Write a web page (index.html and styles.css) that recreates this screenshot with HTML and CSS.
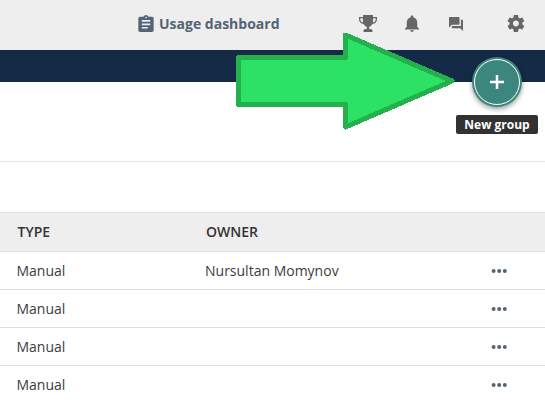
FILE: index.html
```html
<!DOCTYPE html>
<html lang="en">
<head>
<meta charset="utf-8">
<title>Groups</title>
<link rel="stylesheet" href="styles.css">
</head>
<body>
<header class="topbar">
  <a class="usage">
    <svg class="usage-icon" viewBox="3 1 18 20"><path d="M19 3h-4.180C14.400 1.840 13.300 1 12 1s-2.400.84-2.820 2H5c-1.100 0-2 .9-2 2v14c0 1.100.9 2 2 2h14c1.100 0 2-.9 2-2V5c0-1.100-.9-2-2-2zm-7 0c.55 0 1 .45 1 1s-.45 1-1 1-1-.45-1-1 .45-1 1-1zm2 14H7v-2h7v2zm3-4H7v-2h10v2zm0-4H7V7h10v2z"/></svg>
    <span>Usage dashboard</span>
  </a>
  <nav class="actions">
    <svg class="trophy" viewBox="0 0 18 17"><path fill-rule="evenodd" d="M4 0h10v2h4v2.200c0 2.500-1.800 4.500-4.600 4.800-.8 1.500-1.900 2.400-3.200 2.800V14h1.300c1.200 0 2 .8 2 2v1h-9v-1c0-1.200.8-2 2-2h1.300v-2.200C6.500 11.400 5.400 10.500 4.600 9 1.800 8.700 0 6.700 0 4.200V2h4zM1.300 3.300v.9c0 1.600 1 2.900 2.800 3.400C3.900 6.300 3.900 4.800 3.900 3.300zM14.100 3.300c0 1.500 0 3-.2 4.300 1.800-.5 2.800-1.800 2.800-3.400v-.9z"/></svg>
    <svg class="bell" viewBox="4 2 16 20" preserveAspectRatio="none"><path d="M12 22c1.100 0 2-.9 2-2h-4c0 1.100.89 2 2 2zm6-6v-5c0-3.070-1.640-5.640-4.500-6.320V4c0-.83-.67-1.500-1.500-1.500s-1.500.67-1.500 1.500v.68C7.630 5.360 6 7.920 6 11v5l-2 2v1h16v-1l-2-2z"/></svg>
    <svg class="forum" viewBox="2 2 20 20"><path d="M21 6h-2v9H6v2c0 .55.45 1 1 1h11l4 4V7c0-.55-.45-1-1-1zm-4 6V3c0-.55-.45-1-1-1H3c-.55 0-1 .45-1 1v14l4-4h10c.55 0 1-.45 1-1z"/></svg>
    <svg class="gear" viewBox="1.500 2 20 20"><path d="M19.430 12.980c.04-.32.07-.64.07-.98s-.03-.66-.07-.98l2.110-1.650c.19-.15.24-.42.12-.64l-2-3.460c-.12-.22-.39-.3-.61-.22l-2.490 1c-.52-.4-1.080-.73-1.690-.98l-.38-2.650C14.460 2.180 14.250 2 14 2h-4c-.25 0-.46.18-.49.42l-.38 2.650c-.61.25-1.170.59-1.690.98l-2.490-1c-.23-.09-.49 0-.61.22l-2 3.460c-.13.22-.07.49.12.64l2.110 1.650c-.04.32-.07.65-.07.98s.03.66.07.98l-2.110 1.650c-.19.15-.24.42-.12.64l2 3.460c.12.22.39.3.61.22l2.490-1c.52.4 1.080.73 1.690.98l.38 2.650c.03.24.24.42.49.42h4c.25 0 .46-.18.49-.42l.38-2.650c.61-.25 1.170-.59 1.690-.98l2.490 1c.23.09.49 0 .61-.22l2-3.460c.12-.22.07-.49-.12-.64l-2.110-1.650zM12 15.500c-1.930 0-3.500-1.570-3.500-3.500s1.570-3.500 3.500-3.500 3.500 1.570 3.500 3.500-1.570 3.500-3.500 3.500z"/></svg>
  </nav>
</header>
<div class="banner">
  <svg class="arrow" viewBox="0 0 220 100" shape-rendering="crispEdges"><path d="M3.500 26.500H110.500V4L217 50 110.500 96V73.500H3.500Z"/></svg>
  <button class="add" aria-label="New group"><svg viewBox="0 0 14 14"><path d="M7 0v14M0 7h14"/></svg></button>
  <div class="tooltip">New group</div>
</div>
<div class="spacer"></div>
<div class="filters"></div>
<main class="table">
  <div class="row head"><span>TYPE</span><span>OWNER</span><span></span></div>
  <div class="row"><span>Manual</span><span>Nursultan Momynov</span><svg class="more" viewBox="0 0 16 4"><circle cx="2.600" cy="2" r="2"/><circle cx="8.200" cy="2" r="2"/><circle cx="13.800" cy="2" r="2"/></svg></div>
  <div class="row"><span>Manual</span><span></span><svg class="more" viewBox="0 0 16 4"><circle cx="2.600" cy="2" r="2"/><circle cx="8.200" cy="2" r="2"/><circle cx="13.800" cy="2" r="2"/></svg></div>
  <div class="row"><span>Manual</span><span></span><svg class="more" viewBox="0 0 16 4"><circle cx="2.600" cy="2" r="2"/><circle cx="8.200" cy="2" r="2"/><circle cx="13.800" cy="2" r="2"/></svg></div>
  <div class="row"><span>Manual</span><span></span><svg class="more" viewBox="0 0 16 4"><circle cx="2.600" cy="2" r="2"/><circle cx="8.200" cy="2" r="2"/><circle cx="13.800" cy="2" r="2"/></svg></div>
</main>
</body>
</html>
```
FILE: styles.css
```css
* { box-sizing: border-box; }
body {
  margin: 0;
  height: 404px;
  overflow: hidden;
  background: #fff;
  color: #3d3d3d;
  font: 14px/20px "Open Sans", "Noto Sans", sans-serif;
}
svg { display: block; flex: none; }
.topbar {
  display: flex;
  justify-content: space-between;
  height: 50px;
  padding: 0 21px 0 138px;
  background: #eee;
}
.usage {
  display: flex;
  align-items: center;
  gap: 5px;
  height: 47px;
  color: #526475;
  font-weight: 700;
}
.usage-icon { width: 16px; height: 17px; fill: #526475; }
.actions { display: flex; align-items: center; height: 47px; fill: #666; }
.trophy { width: 18px; height: 17px; margin-right: 28px; }
.bell { width: 14px; height: 17px; margin-right: 30px; }
.forum { width: 14px; height: 14px; margin-right: 44px; }
.gear { width: 17px; height: 17px; overflow: visible; }
.banner { position: relative; height: 32px; background: #152a46; }
.arrow {
  position: absolute;
  z-index: 1;
  left: 235px;
  top: -19px;
  width: 220px;
  height: 100px;
  overflow: visible;
  fill: #2ce264;
  stroke: #24b14d;
  stroke-width: 5;
  stroke-linejoin: round;
}
.add {
  position: absolute;
  left: 472px;
  top: 7px;
  display: flex;
  align-items: center;
  justify-content: center;
  width: 50px;
  height: 50px;
  padding: 0;
  border: 0;
  border-radius: 50%;
  background: #3c877d;
  box-shadow: 0 2px 5px rgba(0, 0, 0, .4);
}
.add::before {
  content: "";
  position: absolute;
  inset: 2px;
  border: 1px solid #fff;
  border-radius: 50%;
}
.add svg { width: 14px; height: 14px; fill: none; stroke: #fff; stroke-width: 2.500; }
.tooltip {
  position: absolute;
  left: 456px;
  top: 65px;
  width: 82px;
  height: 19px;
  border-radius: 2px;
  background: #323232;
  color: #fff;
  font-size: 12px;
  font-weight: 700;
  line-height: 19px;
  text-align: center;
}
.spacer { height: 80px; border-bottom: 1px solid #e3e3e3; }
.filters { height: 50px; }
.row {
  display: grid;
  grid-template-columns: 188.500px 286px 16px;
  align-items: center;
  height: 38px;
  padding-left: 16.500px;
  border-bottom: 1px solid #e0e0e0;
}
.row:last-child { border-bottom-color: transparent; }
.head {
  height: 40px;
  padding-left: 17.500px;
  border-top: 1px solid #e0e0e0;
  background: #eee;
  color: #333;
  font-weight: 600;
}
.more { width: 16px; height: 4px; fill: #526475; }
```
